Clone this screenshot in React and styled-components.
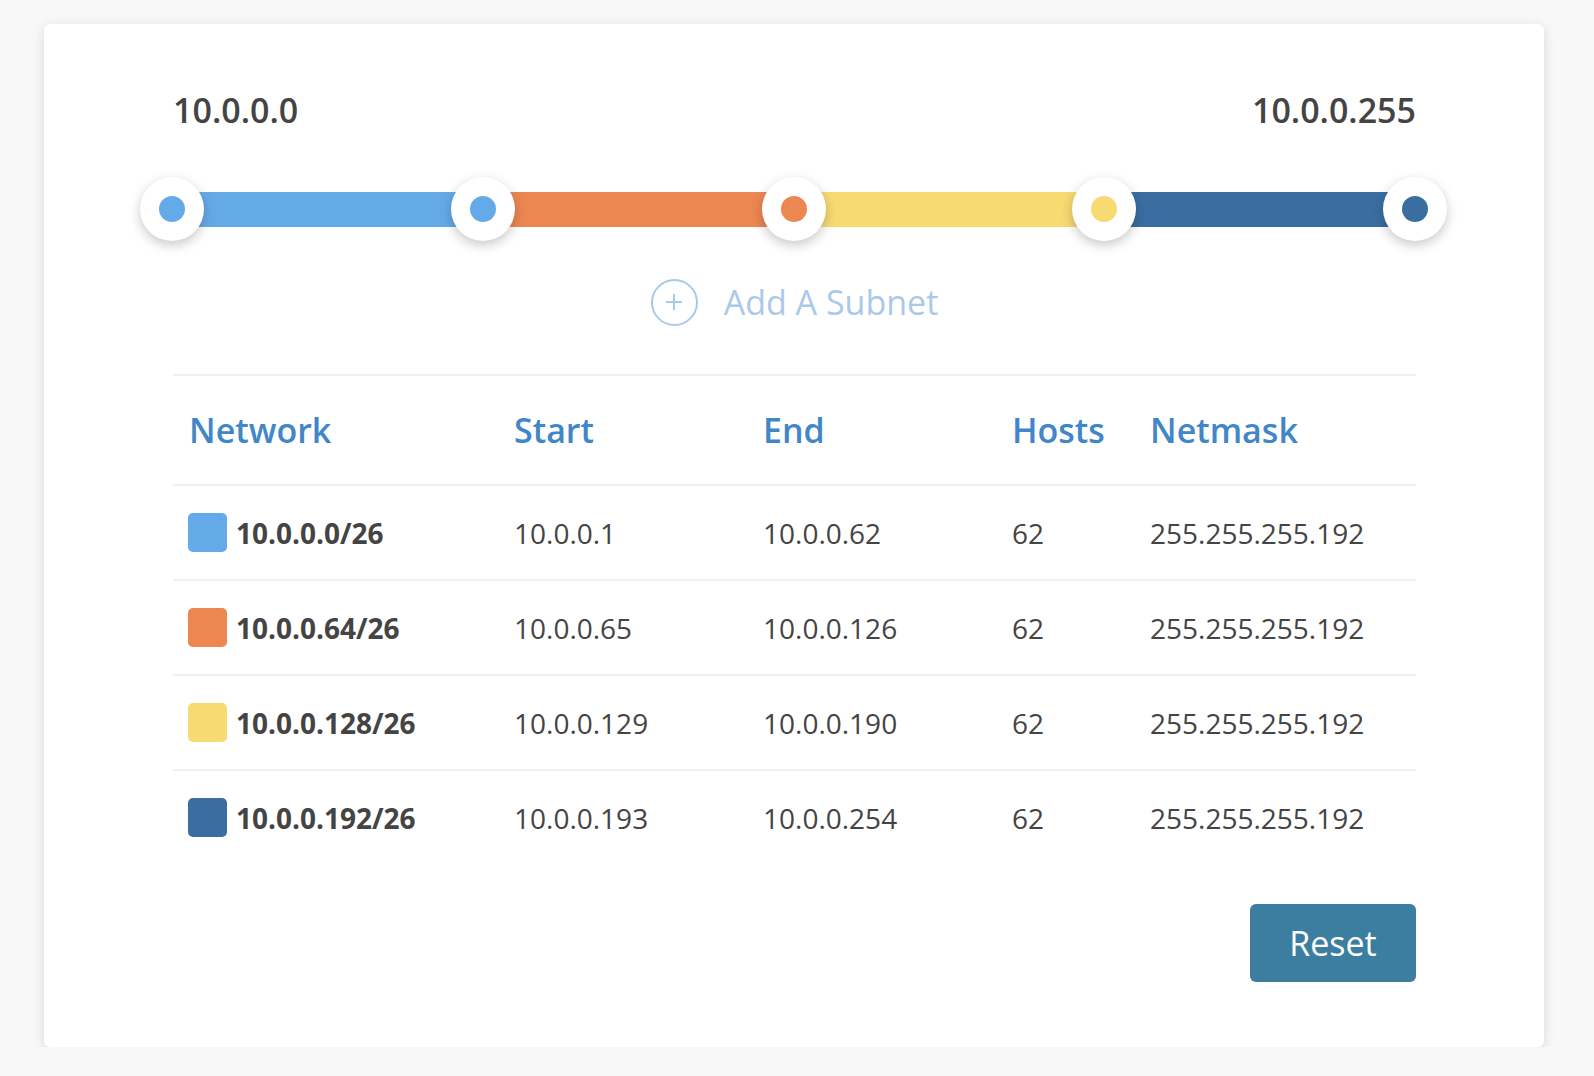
import React from 'react';
import styled, {createGlobalStyle} from "styled-components";

const subnets = [
    {network: '10.0.0.0/26', start: '10.0.0.1', end: '10.0.0.62', hosts: 62, netmask: '255.255.255.192', color: '#65aae8'},
    {network: '10.0.0.64/26', start: '10.0.0.65', end: '10.0.0.126', hosts: 62, netmask: '255.255.255.192', color: '#ec8751'},
    {network: '10.0.0.128/26', start: '10.0.0.129', end: '10.0.0.190', hosts: 62, netmask: '255.255.255.192', color: '#f7da72'},
    {network: '10.0.0.192/26', start: '10.0.0.193', end: '10.0.0.254', hosts: 62, netmask: '255.255.255.192', color: '#3a6ea1'},
];

const GlobalStyle = createGlobalStyle`
  html, body {
    margin: 0;
    padding: 0;
    background: #f8f8f8;
    font-family: "Open Sans", "Liberation Sans", sans-serif;
  }
`

const App = () => {
    // one handle at every boundary, coloured like the subnet on its left (first one like the first)
    const handles = [subnets[0].color, ...subnets.map(s => s.color)];
    return (<Page>
        <GlobalStyle/>
        <Card>
            <RangeLabels>
                <span>10.0.0.0</span>
                <span>10.0.0.255</span>
            </RangeLabels>
            <Slider>
                <Track>
                    {subnets.map(s => <Segment key={s.network} $color={s.color}/>)}
                </Track>
                {handles.map((c, i) => (
                    <Handle key={i} style={{left: `${(i / subnets.length) * 100}%`}}>
                        <Dot $color={c}/>
                    </Handle>
                ))}
            </Slider>
            <AddSubnet>
                <PlusCircle>
                    <svg width="22" height="22" viewBox="0 0 22 22">
                        <path d="M11 3v16M3 11h16" stroke="#a9c9ea" strokeWidth="2" fill="none"/>
                    </svg>
                </PlusCircle>
                Add A Subnet
            </AddSubnet>
            <Table>
                <HeadRow>
                    <HeadCell>Network</HeadCell>
                    <HeadCell>Start</HeadCell>
                    <HeadCell>End</HeadCell>
                    <HeadCell>Hosts</HeadCell>
                    <HeadCell>Netmask</HeadCell>
                </HeadRow>
                {subnets.map(s => (
                    <Row key={s.network}>
                        <Cell>
                            <NetworkName>
                                <Swatch $color={s.color}/>
                                {s.network}
                            </NetworkName>
                        </Cell>
                        <Cell>{s.start}</Cell>
                        <Cell>{s.end}</Cell>
                        <Cell>{s.hosts}</Cell>
                        <Cell>{s.netmask}</Cell>
                    </Row>
                ))}
            </Table>
            <Footer>
                <ResetButton>Reset</ResetButton>
            </Footer>
        </Card>
    </Page>);
};

const Page = styled.div`
  padding: 24px 0 0 44px;
`

const Card = styled.div`
  width: 1500px;
  box-sizing: border-box;
  background: #fff;
  border-radius: 6px;
  box-shadow: 0 3px 12px rgba(0, 0, 0, 0.13);
  padding: 62px 128px 65px 129px;
  display: flex;
  flex-direction: column;
`

const RangeLabels = styled.div`
  display: flex;
  justify-content: space-between;
  font-size: 34px;
  font-weight: 600;
  line-height: 48px;
  color: #444;
`

const Slider = styled.div`
  position: relative;
  height: 64px;
  margin-top: 43px;
  display: flex;
  align-items: center;
`

const Track = styled.div`
  display: flex;
  width: 100%;
  height: 35px;
`

const Segment = styled.div`
  flex: 1;
  background: ${p => p.$color};
`

const Handle = styled.div`
  position: absolute;
  top: 0;
  width: 64px;
  height: 64px;
  margin-left: -33px;
  border-radius: 50%;
  background: #fff;
  box-shadow: 0 4px 12px rgba(0, 0, 0, 0.22);
  display: flex;
  align-items: center;
  justify-content: center;
`

const Dot = styled.div`
  width: 26px;
  height: 26px;
  border-radius: 50%;
  background: ${p => p.$color};
`

const AddSubnet = styled.div`
  align-self: center;
  display: flex;
  align-items: center;
  gap: 26px;
  margin-top: 37px;
  font-size: 34px;
  line-height: 48px;
  color: #a9c9ea;
`

const PlusCircle = styled.div`
  width: 43px;
  height: 43px;
  border: 2px solid #a9c9ea;
  border-radius: 50%;
  display: flex;
  align-items: center;
  justify-content: center;
`

const Table = styled.div`
  margin-top: 48px;
  display: flex;
  flex-direction: column;
`

const HeadRow = styled.div`
  display: grid;
  grid-template-columns: 325px 249px 249px 138px 1fr;
  height: 110px;
  align-items: center;
  border-top: 2px solid #f0f0f0;
  box-sizing: border-box;
`

const HeadCell = styled.div`
  padding-left: 16px;
  font-size: 34px;
  font-weight: 600;
  color: #4186c8;
`

const Row = styled.div`
  display: grid;
  grid-template-columns: 325px 249px 249px 138px 1fr;
  height: 95px;
  align-items: center;
  border-top: 2px solid #f0f0f0;
  box-sizing: border-box;
`

const Cell = styled.div`
  padding-left: 16px;
  font-size: 28px;
  color: #444;
`

const NetworkName = styled.div`
  display: flex;
  align-items: center;
  gap: 9px;
  font-weight: 700;
  margin-left: -1px;
`

const Swatch = styled.div`
  width: 39px;
  height: 39px;
  border-radius: 5px;
  background: ${p => p.$color};
`

const Footer = styled.div`
  display: flex;
  justify-content: flex-end;
  margin-top: 40px;
`

const ResetButton = styled.button`
  width: 166px;
  height: 78px;
  border: none;
  border-radius: 6px;
  background: #3c7e9f;
  color: #fff;
  font-family: "Open Sans", "Liberation Sans", sans-serif;
  font-size: 34px;
  cursor: pointer;
`

export default App;
